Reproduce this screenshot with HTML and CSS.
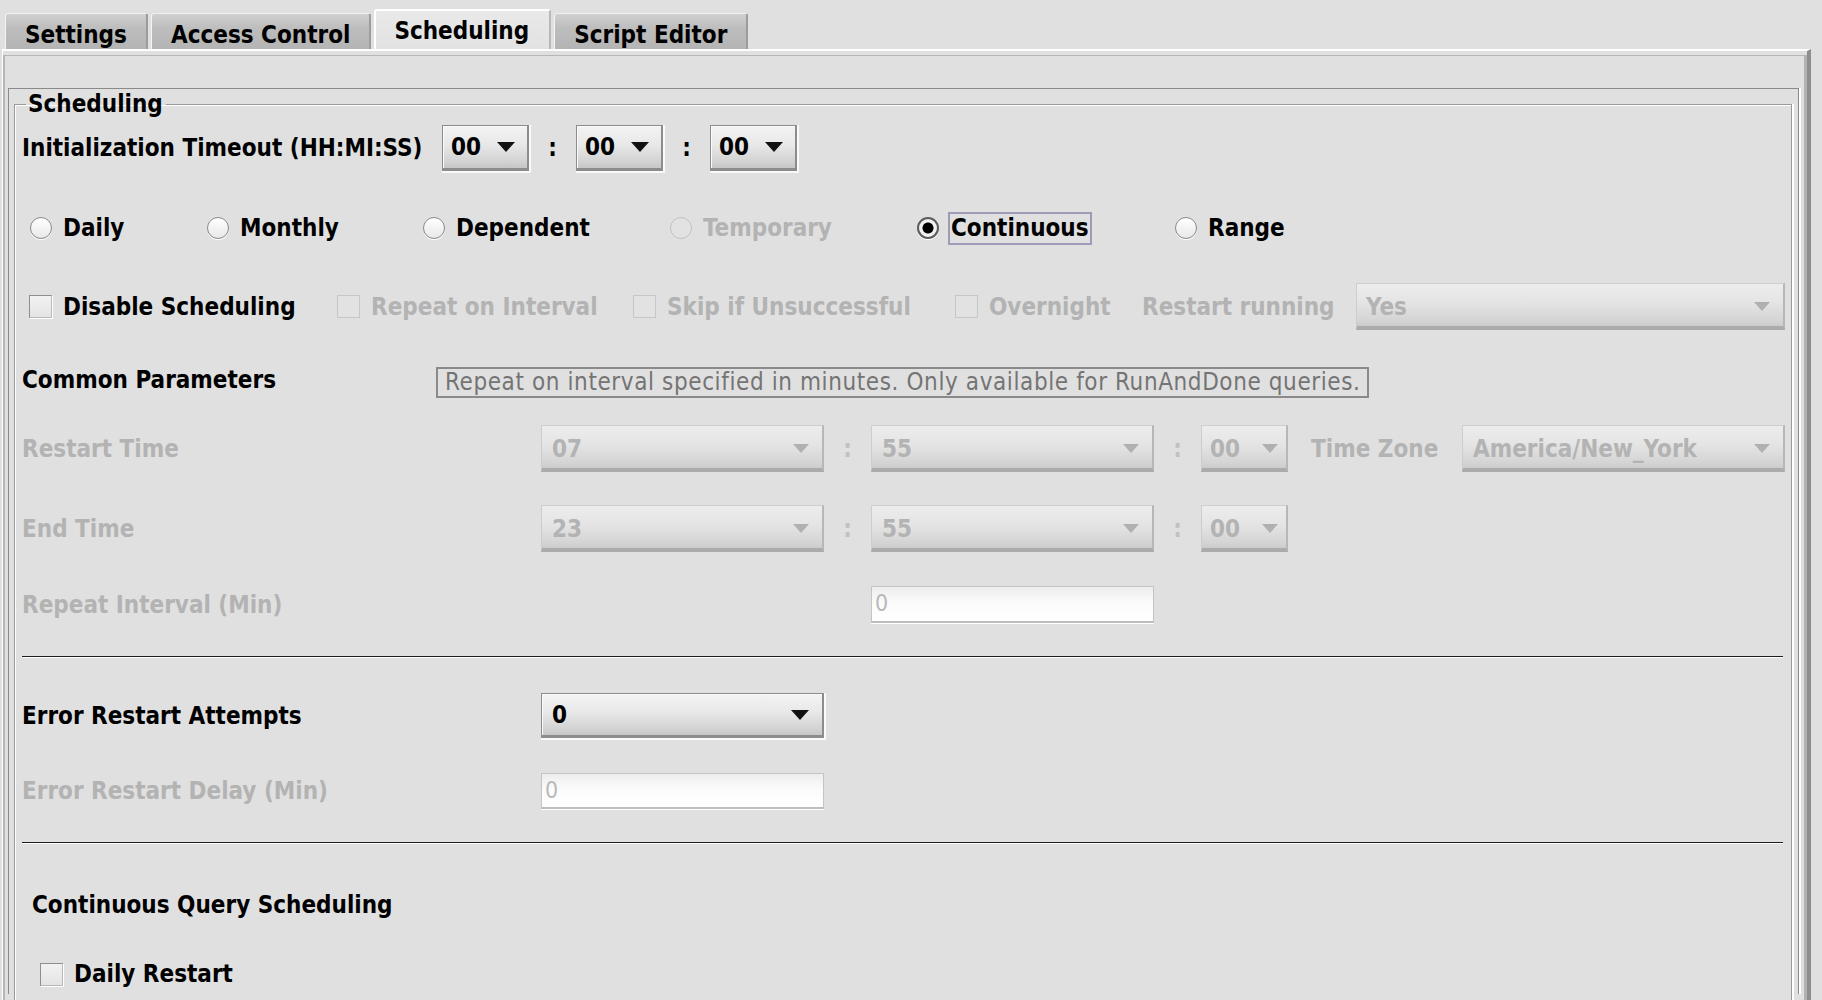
FILE: index.html
```html
<!DOCTYPE html>
<html>
<head>
<meta charset="utf-8">
<link rel="stylesheet" href="styles.css">
</head>
<body>
<div class="tabs">
  <div class="tab">Settings</div>
  <div class="tab">Access Control</div>
  <div class="tab sel">Scheduling</div>
  <div class="tab">Script Editor</div>
</div>
<div class="tabpanel">
  <div class="tabpanel-in">
    <div class="inner">
      <fieldset class="titled">
        <legend>Scheduling</legend>

        <div class="row r-init">
          <span class="lbl init-lbl">Initialization Timeout (HH:MI:SS)</span>
          <div class="combo en small"><span>00</span><i class="arr"></i></div>
          <span class="colon en-colon">:</span>
          <div class="combo en small"><span>00</span><i class="arr"></i></div>
          <span class="colon en-colon">:</span>
          <div class="combo en small"><span>00</span><i class="arr"></i></div>
        </div>

        <div class="row r-radios">
          <label class="opt w-daily"><i class="radio"></i><span>Daily</span></label>
          <label class="opt w-monthly"><i class="radio"></i><span>Monthly</span></label>
          <label class="opt w-dep"><i class="radio"></i><span>Dependent</span></label>
          <label class="opt w-temp dis"><i class="radio"></i><span>Temporary</span></label>
          <label class="opt w-cont"><i class="radio on"></i><span class="focus">Continuous</span></label>
          <label class="opt"><i class="radio"></i><span>Range</span></label>
        </div>

        <div class="row r-checks">
          <label class="opt w-c1"><i class="check"></i><span>Disable Scheduling</span></label>
          <label class="opt w-c2 dis"><i class="check"></i><span>Repeat on Interval</span></label>
          <label class="opt w-c3 dis"><i class="check"></i><span>Skip if Unsuccessful</span></label>
          <label class="opt w-c4 dis"><i class="check"></i><span>Overnight</span></label>
          <span class="lbl dis w-c5">Restart running</span>
          <div class="combo dcombo grow"><span>Yes</span><i class="arr"></i></div>
        </div>

        <div class="row r-common">
          <span class="lbl common-lbl">Common Parameters</span>
          <div class="tooltip">Repeat on interval specified in minutes. Only available for RunAndDone queries.</div>
        </div>

        <div class="grid r-restart">
          <span class="lbl dis">Restart Time</span>
          <div class="combo dcombo"><span>07</span><i class="arr"></i></div>
          <span class="colon">:</span>
          <div class="combo dcombo"><span>55</span><i class="arr"></i></div>
          <span class="colon">:</span>
          <div class="combo dcombo tiny"><span>00</span><i class="arr"></i></div>
          <span class="lbl dis tz">Time Zone</span>
          <div class="combo dcombo"><span>America/New_York</span><i class="arr"></i></div>
        </div>

        <div class="grid r-end">
          <span class="lbl dis">End Time</span>
          <div class="combo dcombo"><span>23</span><i class="arr"></i></div>
          <span class="colon">:</span>
          <div class="combo dcombo"><span>55</span><i class="arr"></i></div>
          <span class="colon">:</span>
          <div class="combo dcombo tiny"><span>00</span><i class="arr"></i></div>
        </div>

        <div class="grid r-repeat">
          <span class="lbl dis">Repeat Interval (Min)</span>
          <span></span>
          <span></span>
          <div class="field">0</div>
        </div>

        <div class="sep sep1"></div>

        <div class="grid r-attempts">
          <span class="lbl">Error Restart Attempts</span>
          <div class="combo en"><span>0</span><i class="arr"></i></div>
        </div>

        <div class="grid r-delay">
          <span class="lbl dis">Error Restart Delay (Min)</span>
          <div class="field">0</div>
        </div>

        <div class="sep sep2"></div>

        <div class="row r-cqs">
          <span class="lbl">Continuous Query Scheduling</span>
        </div>

        <div class="row r-daily">
          <label class="opt"><i class="check"></i><span>Daily Restart</span></label>
        </div>
      </fieldset>
    </div>
  </div>
</div>
</body>
</html>
```

FILE: styles.css
```css
html, body {
  margin: 0;
  padding: 0;
  background: #e0e0e0;
  overflow: hidden;
  height: 1000px;
}
body {
  font-family: "DejaVu Sans Condensed", "DejaVu Sans", sans-serif;
  font-stretch: condensed;
  font-weight: bold;
  font-size: 24px;
  color: #000;
}

/* ---------- tabs ---------- */
.tabs {
  display: flex;
  align-items: flex-end;
  height: 49px;
  padding-left: 5px;
  gap: 3px;
}
.tab {
  height: 36px;
  box-sizing: border-box;
  padding: 6px 19px 0;
  background: linear-gradient(#d0d0d0, #bdbdbd 40%, #b4b4b4);
  border-top: 1px solid #f0f0f0;
  border-left: 1px solid #f4f4f4;
  border-right: 2px solid #9c9c9c;
  border-radius: 3px 3px 0 0;
  line-height: 30px;
}
.tab.sel {
  height: 40px;
  background: linear-gradient(#e9e9e9, #e2e2e2);
  border-top: 2px solid #fff;
  border-left: 2px solid #fff;
  border-right: 2px solid #b8b8b8;
  padding: 5px 20px 0 18px;
  line-height: 30px;
}

/* ---------- tab panel frames ---------- */
.tabpanel {
  margin: 0 11px 0 2px;
  border-top: 2px solid #fff;
  border-left: 1px solid #fff;
  border-right: 4px solid #8e8e8e;
  padding-top: 4px;
  height: 960px;
}
.tabpanel-in {
  border-top: 1px solid #b6b6b6;
  border-left: 2px solid #b6b6b6;
  border-right: 3px solid #b2b2b2;
  padding: 32px 3px 0 3px;
  height: 940px;
}
.inner {
  border-top: 1px solid #8a8a8a;
  border-left: 1px solid #8a8a8a;
  border-right: 1px solid #8a8a8a;
  box-shadow: 2px 0 0 #fff;
  padding: 5px 7px 0 5px;
  margin-right: 2px;
  height: 900px;
}
.titled {
  margin: 0;
  border: 1px solid #9a9a9a;
  box-shadow: inset 1px 1px 0 #fff, 1px 1px 0 #fff, 2px 0 0 #fff;
  padding: 0 6px 0 7px;
  height: 920px;
  box-sizing: border-box;
}
.titled legend {
  padding: 0 3px 0 2px;
  margin-left: 4px;
  line-height: 20px;
}

/* ---------- rows ---------- */
.row {
  display: flex;
  align-items: center;
}
.grid {
  display: grid;
  grid-template-columns: 519px 283px 47px 283px 47px 87px 174px 323px;
  align-items: center;
}
.lbl { white-space: nowrap; }
.dis, .dis span { color: #b3b3b3; }

.r-init { margin-top: 11px; height: 46px; }
.init-lbl { width: 420px; }
.colon { text-align: center; color: #c0c0c0; font-weight: bold; }
.en-colon { width: 47px; color: #000; }

.r-radios { margin-top: 40px; height: 34px; padding-left: 8px; }
.r-checks { margin-top: 38px; height: 47px; padding-left: 7px; }
.r-common { margin-top: 37px; height: 31px; }
.r-restart { margin-top: 27px; height: 47px; }
.r-end { margin-top: 33px; height: 46px; }
.r-repeat { margin-top: 35px; height: 37px; }
.r-attempts { margin-top: 35px; height: 45px; }
.r-delay { margin-top: 35px; height: 36px; }
.r-cqs { margin-top: 46px; height: 30px; padding-left: 10px; }
.r-daily { margin-top: 39px; height: 30px; padding-left: 18px; }

.sep {
  border-top: 1px solid #1e1e1e;
  border-bottom: 1px solid #fff;
  margin-right: 2px;
}
.sep1 { margin-top: 33px; }
.sep2 { margin-top: 33px; }

/* option (radio / checkbox + text) */
.opt {
  display: flex;
  align-items: center;
  gap: 11px;
  white-space: nowrap;
}
.w-daily { width: 177px; }
.w-monthly { width: 216px; }
.w-dep { width: 247px; }
.w-temp { width: 247px; }
.w-cont { width: 258px; }
.w-c1 { width: 308px; }
.w-c2 { width: 296px; }
.w-c3 { width: 322px; }
.w-c4 { width: 187px; }
.w-c5 { width: 214px; }

.radio {
  display: block;
  width: 22px;
  height: 22px;
  box-sizing: border-box;
  border-radius: 50%;
  border: 1px solid #8a8a8a;
  background: linear-gradient(#ffffff, #e8e8e8);
  box-shadow: 0 1px 0 #fff;
}
.dis .radio { border-color: #c2c2c2; background: #e2e2e2; box-shadow: none; }
.radio.on {
  border: 2px solid #5c5c5c;
  background: radial-gradient(circle, #000 0 5px, #f2f2f2 6px);
}
.focus {
  border: 2px solid #9c9cb6;
  padding: 0 1px 0 1px;
  margin-left: -2px;
  line-height: 29px;
}

.check {
  display: block;
  width: 23px;
  height: 23px;
  box-sizing: border-box;
  border: 1px solid #8e8e8e;
  border-bottom-color: #b8b8b8;
  border-right-color: #b8b8b8;
  background: linear-gradient(#f2f2f2, #e4e4e4);
  box-shadow: 1px 1px 0 #fff;
}
.dis .check { border-color: #c6c6c6; background: #e2e2e2; box-shadow: none; }

/* ---------- combo boxes ---------- */
.combo {
  display: flex;
  align-items: center;
  justify-content: space-between;
  box-sizing: border-box;
  height: 46px;
  padding: 0 13px 0 10px;
  white-space: nowrap;
}
.combo.en {
  border: 1px solid #8c8c8c;
  border-bottom: 3px solid #8c8c8c;
  border-right: 2px solid #8c8c8c;
  box-shadow: 1px 1px 0 1px #fafafa, inset 1px 1px 0 #fafafa;
  background: linear-gradient(#f3f3f3, #e8e8e8 45%, #d2d2d2 85%, #c6c6c6);
  height: 45px;
}
.combo.small { width: 87px; height: 46px; padding-left: 8px; padding-right: 12px; }
.dcombo {
  border: 1px solid #cdcdcd;
  border-bottom: 4px solid #ababab;
  border-right: 2px solid #b7b7b7;
  background: linear-gradient(#ededed, #e4e4e4 45%, #d3d3d3 90%, #cbcbcb);
  color: #b3b3b3;
  height: 47px;
  padding-top: 3px;
}
.dcombo.grow { flex: 1; padding-left: 9px; }
.tiny { width: 87px; padding-left: 8px; padding-right: 8px; }

.arr {
  display: block;
  width: 0;
  height: 0;
  border-left: 9px solid transparent;
  border-right: 9px solid transparent;
  border-top: 10px solid #111;
}
.dcombo .arr {
  border-left-width: 8px;
  border-right-width: 8px;
  border-top: 9px solid #b0b0b0;
}

.tz { padding-left: 23px; }

/* ---------- text fields ---------- */
.field {
  box-sizing: border-box;
  height: 37px;
  border: 1px solid #c4c4c4;
  border-bottom: 2px solid #bdbdbd;
  box-shadow: 0 1px 0 #fff;
  background: linear-gradient(#ededed, #fbfbfb 45%, #fff);
  color: #b8b8b8;
  font-weight: normal;
  font-size: 23px;
  line-height: 33px;
  padding-left: 3px;
}
.r-delay .field { height: 36px; }

/* ---------- tooltip ---------- */
.tooltip {
  margin-left: 195px;
  border: 2px solid #8a8a8a;
  height: 31px;
  box-sizing: border-box;
  padding: 0 6px 0 7px;
  font-weight: normal;
  letter-spacing: 0.6px;
  color: #747474;
  line-height: 27px;
  white-space: nowrap;
}
.common-lbl { width: 219px; margin-top: -6px; }
```
